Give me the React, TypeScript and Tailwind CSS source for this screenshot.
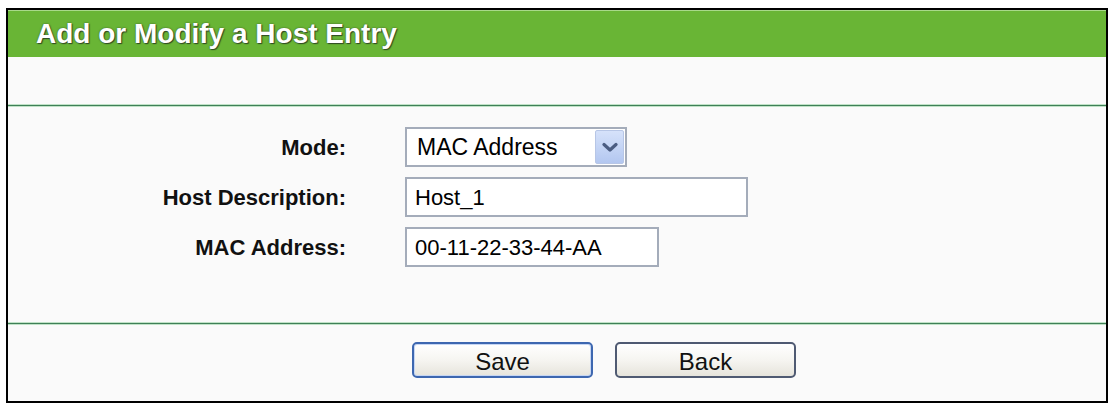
const font = { fontFamily: '"Liberation Sans", Arial, sans-serif' };

function Row({ label, children }: { label: string; children: React.ReactNode }) {
  return (
    <div className="flex items-center h-[40px]">
      <div className="w-[338px] shrink-0 text-right text-[22px] font-bold text-[#111]">{label}</div>
      <div className="pl-[59px]">{children}</div>
    </div>
  );
}

function Field({ value, width }: { value: string; width: string }) {
  return (
    <div className={`${width} h-[40px] border-2 border-[#a4acba] bg-white flex items-center pl-[8px] text-[22px] text-black`}>
      {value}
    </div>
  );
}

function Select() {
  return (
    <div className="w-[222px] h-[40px] border-2 border-[#a4acba] bg-white flex items-center justify-between pl-[10px] pr-[1px] text-[23px] text-black">
      <span>MAC Address</span>
      <div className="w-[29px] h-[34px] rounded-[2px] border border-[#b7c6e6] bg-gradient-to-b from-[#d6e2fa] to-[#b3c7f0] flex items-center justify-center">
        <svg width="16" height="11" viewBox="0 0 16 11">
          <path d="M2 2.5 L8 8 L14 2.5" fill="none" stroke="#4b5d82" strokeWidth="3.2" strokeLinecap="round" strokeLinejoin="round" />
        </svg>
      </div>
    </div>
  );
}

function Button({ label, primary }: { label: string; primary?: boolean }) {
  return (
    <button
      className={`w-[181px] h-[36px] rounded-[5px] border-2 text-[24px] text-[#111] bg-gradient-to-b from-white via-[#f6f5f1] to-[#e6e4dc] ${
        primary ? "border-[#3d67b0] shadow-[inset_0_0_0_1px_#c6d6f3]" : "border-[#4f5a72]"
      }`}
    >
      {label}
    </button>
  );
}

export default function App() {
  return (
    <div className="bg-white w-[1112px] h-[412px] pt-[8px] pl-[6px]" style={font}>
      <div className="w-[1102px] h-[395px] border-2 border-black bg-[#fafafa] flex flex-col">
        <div className="h-[47px] bg-[#69b535] border-t border-[#a9d98a] flex items-center pl-[28px]">
          <h1 className="text-[28px] font-bold text-white [text-shadow:1px_1px_1px_#2f4a22,0_0_2px_#3c5a2c]">
            Add or Modify a Host Entry
          </h1>
        </div>
        <div className="h-[47px]" />
        <div className="h-[3px] border-t border-b border-[#bfe2c6] bg-[#3f7f57]" />
        <div className="flex flex-col gap-[10px] pt-[20px] pb-[55px]">
          <Row label="Mode:">
            <Select />
          </Row>
          <Row label="Host Description:">
            <Field value="Host_1" width="w-[343px]" />
          </Row>
          <Row label="MAC Address:">
            <Field value="00-11-22-33-44-AA" width="w-[254px]" />
          </Row>
        </div>
        <div className="h-[3px] border-t border-b border-[#bfe2c6] bg-[#3f7f57]" />
        <div className="flex gap-[22px] pl-[404px] pt-[17px]">
          <Button label="Save" primary />
          <Button label="Back" />
        </div>
      </div>
    </div>
  );
}
